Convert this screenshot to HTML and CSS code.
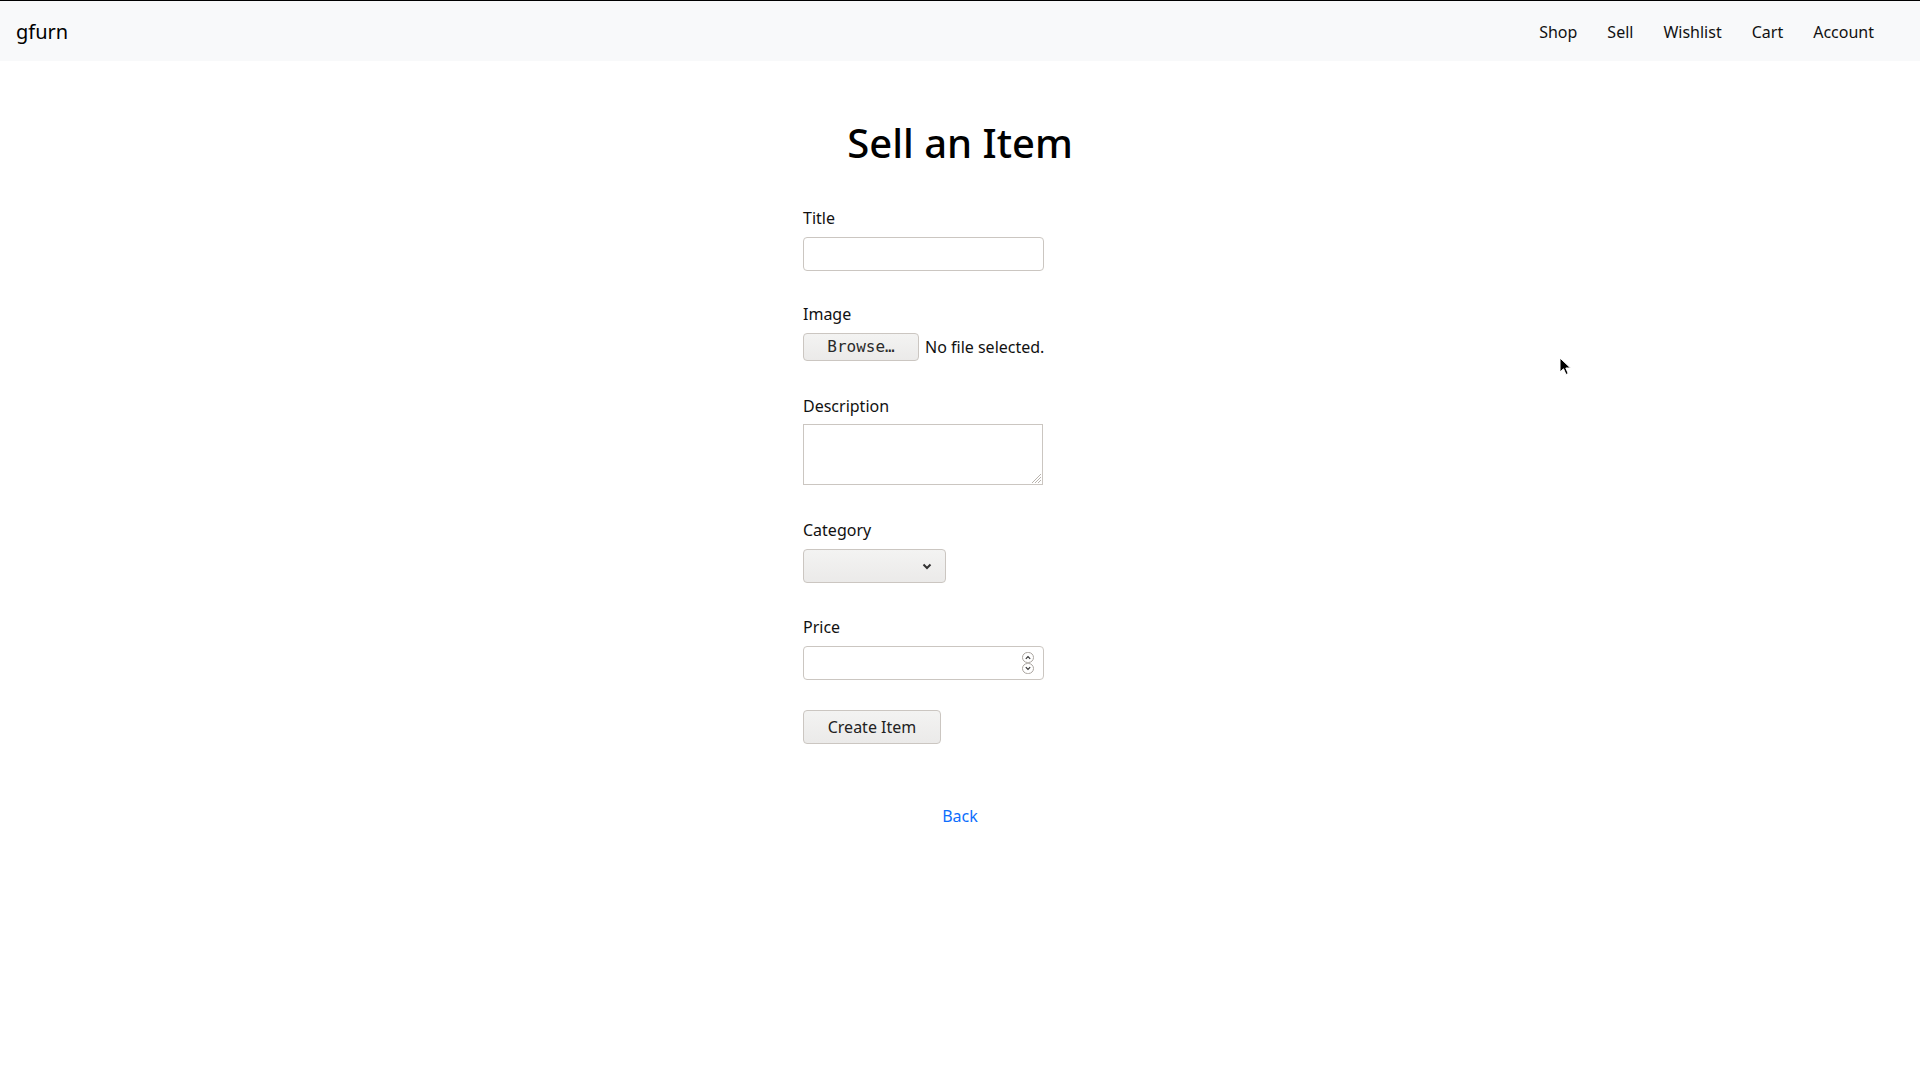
FILE: index.html
```html
<!DOCTYPE html>
<html lang="en">
<head>
<meta charset="utf-8">
<title>gfurn - Sell an Item</title>
<link rel="stylesheet" href="styles.css">
</head>
<body>
<header class="navbar">
  <a class="brand" href="#">gfurn</a>
  <nav class="nav-links">
    <a href="#">Shop</a>
    <a href="#">Sell</a>
    <a href="#">Wishlist</a>
    <a href="#">Cart</a>
    <a href="#">Account</a>
  </nav>
</header>
<main class="page">
  <h1 class="title">Sell an Item</h1>
  <form class="form">
    <div class="field field-title">
      <label class="label">Title</label>
      <div class="input text-input"></div>
    </div>
    <div class="field field-image">
      <label class="label">Image</label>
      <div class="file-row">
        <span class="btn browse">Browse…</span>
        <span class="file-note">No file selected.</span>
      </div>
    </div>
    <div class="field field-desc">
      <label class="label label-desc">Description</label>
      <div class="textarea">
        <svg class="grip" width="11" height="11" viewBox="0 0 11 11"><path d="M10 1L1 10M10 4L4 10M10 7L7 10" stroke="#b9b4ae" stroke-width="1"/></svg>
      </div>
    </div>
    <div class="field">
      <label class="label">Category</label>
      <div class="select">
        <svg class="chev" width="10" height="7" viewBox="0 0 10 7"><path d="M1.5 1.5L5 5L8.5 1.5" fill="none" stroke="#333" stroke-width="2"/></svg>
      </div>
    </div>
    <div class="field field-price">
      <label class="label">Price</label>
      <div class="input number-input">
        <svg class="spin" width="12" height="22" viewBox="0 0 12 22">
          <rect x="0.5" y="0.5" width="11" height="10" rx="5" fill="#fff" stroke="#aaa59f"/>
          <rect x="0.5" y="11.5" width="11" height="10" rx="5" fill="#fff" stroke="#aaa59f"/>
          <path d="M3.8 6.8L6 4.6L8.2 6.8" fill="none" stroke="#333" stroke-width="1.2"/>
          <path d="M3.8 15.2L6 17.4L8.2 15.2" fill="none" stroke="#333" stroke-width="1.2"/>
        </svg>
      </div>
    </div>
    <div class="actions">
      <span class="btn create">Create Item</span>
    </div>
  </form>
  <div class="back-row"><a class="back" href="#">Back</a></div>
</main>
<svg class="cursor" width="14" height="20" viewBox="0 0 14 20"><path d="M1 1L1 15L4.5 11.8L7 17.5L9.2 16.5L6.8 11L11.5 11Z" fill="#000" stroke="#fff" stroke-width="1"/></svg>
</body>
</html>
```
FILE: styles.css
```css
html, body {
  margin: 0;
  padding: 0;
  background: #fff;
}
body {
  font-family: "Noto Sans", "Open Sans", sans-serif;
  font-size: 16px;
  line-height: 24px;
  color: #111;
  border-top: 1px solid #000;
  min-height: 1079px;
  position: relative;
}
a { text-decoration: none; }

.navbar {
  height: 60px;
  background: #f8f9fa;
  display: flex;
  align-items: center;
  justify-content: space-between;
  padding: 0 46px 0 16px;
}
.brand {
  font-size: 20px;
  line-height: 30px;
  color: #000;
  padding-top: 1px;
}
.nav-links {
  display: flex;
  gap: 30px;
  padding-top: 2px;
}
.nav-links a {
  color: #111;
  font-size: 16px;
  line-height: 24px;
}

.page {
  width: 314px;
  margin: 0 auto;
}
.title {
  font-size: 40px;
  line-height: 48px;
  font-weight: 500;
  color: #000;
  text-align: center;
  margin: 58px -100px 39px;
}
.field {
  margin-bottom: 32px;
}
.field-title { margin-bottom: 31px; }
.field-image { margin-bottom: 33px; }
.field-desc { margin-bottom: 33px; }
.field-price { margin-bottom: 30px; }
.label {
  display: block;
  line-height: 24px;
  margin-bottom: 7px;
  color: #111;
}
.label-desc { margin-bottom: 6px; }

.input {
  box-sizing: border-box;
  width: 241px;
  height: 34px;
  border: 1px solid #cbc6c1;
  border-radius: 4px;
  background: #fff;
  position: relative;
}
.number-input {
  display: flex;
  align-items: center;
  justify-content: flex-end;
  padding-right: 9px;
}
.spin { display: block; }

.file-row {
  display: flex;
  align-items: center;
  gap: 6px;
  height: 28px;
}
.btn {
  box-sizing: border-box;
  display: inline-flex;
  align-items: center;
  justify-content: center;
  border: 1px solid #cbc6c1;
  border-radius: 4px;
  background: linear-gradient(#f3f3f2, #ebeae9);
  color: #222;
}
.browse {
  width: 116px;
  height: 28px;
  font-family: "DejaVu Sans Mono", monospace;
  font-size: 16px;
  color: #2a2a2a;
}
.file-note {
  color: #111;
}

.textarea {
  box-sizing: border-box;
  width: 240px;
  height: 61px;
  border: 1px solid #cbc6c1;
  background: #fff;
  display: flex;
  justify-content: flex-end;
  align-items: flex-end;
}
.grip { display: block; }

.select {
  box-sizing: border-box;
  width: 143px;
  height: 34px;
  border: 1px solid #cbc6c1;
  border-radius: 4px;
  background: linear-gradient(#f3f3f2, #ebeae9);
  display: flex;
  align-items: center;
  justify-content: flex-end;
  padding-right: 13px;
}
.chev { display: block; }

.actions { display: flex; }
.create {
  width: 138px;
  height: 34px;
  font-size: 16px;
}

.back-row {
  text-align: center;
  margin-top: 60px;
  line-height: 24px;
}
.back {
  color: #0d6efd;
}

.cursor {
  position: absolute;
  left: 1559px;
  top: 356px;
}
```
